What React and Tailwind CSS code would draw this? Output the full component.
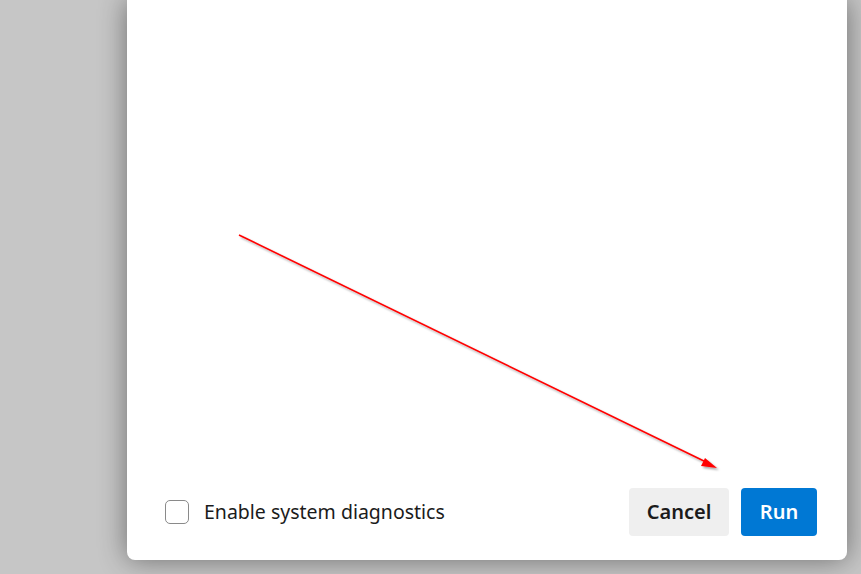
export default function App() {
  return (
    <div className="relative h-[574px] w-[861px] overflow-hidden bg-[#c6c6c6]" style={{ fontFamily: '"Noto Sans", "Open Sans", sans-serif' }}>
      <div className="ml-[127px] flex h-[560px] w-[720px] flex-col justify-end rounded-b-lg bg-white shadow-[0_0_28px_rgba(0,0,0,0.45)]">
        <div className="flex items-center justify-between pb-6 pl-[38px] pr-[30px]">
          <label className="flex items-center gap-[15px]">
            <span className="h-6 w-6 rounded-[5px] border border-[#8a8a8a] bg-white" />
            <span className="text-[19.5px] text-[#1b1b1b]">Enable system diagnostics</span>
          </label>
          <div className="flex gap-3">
            <button className="h-12 w-[100px] rounded bg-[#efefef] text-[20px] font-semibold text-[#1b1b1b]">Cancel</button>
            <button className="h-12 w-[76px] rounded bg-[#0078d4] text-[20px] font-semibold text-white">Run</button>
          </div>
        </div>
      </div>
      <svg className="absolute left-0 top-0" width="861" height="574">
        <defs>
          <filter id="sh" x="-10%" y="-10%" width="120%" height="120%">
            <feDropShadow dx="2" dy="2" stdDeviation="1.2" floodColor="#000" floodOpacity="0.35" />
          </filter>
        </defs>
        <g filter="url(#sh)">
          <line x1="239" y1="235" x2="708" y2="463" stroke="#ff0000" strokeWidth="1.6" />
          <polygon points="717,468 701,466 705,458" fill="#ff0000" />
        </g>
      </svg>
    </div>
  );
}
